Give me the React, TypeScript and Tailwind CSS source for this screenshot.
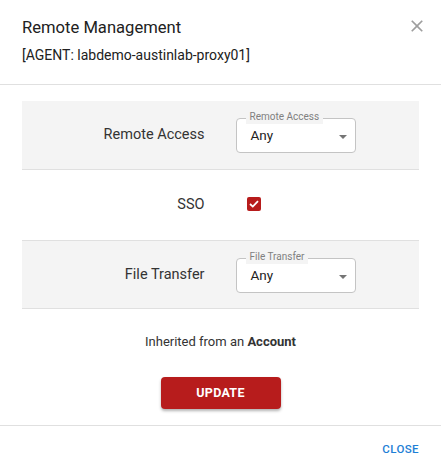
import React from "react";

function Select({ label, value }: { label: string; value: string }) {
  return (
    <div className="relative h-[35px] w-[120px] rounded-[4px] border border-[#c4c4c4] bg-white flex items-center pl-[14px]">
      <span className="absolute -top-[9px] left-[9px] bg-[#f4f4f4] px-[4px] text-[10px] leading-[14px] text-[#808080]">
        {label}
      </span>
      <span className="text-[13.5px] text-[#222]">{value}</span>
      <svg className="absolute right-[8px] top-[16px]" width="8" height="4" viewBox="0 0 8 4">
        <path d="M0 0 L8 0 L4 4 Z" fill="#757575" />
      </svg>
    </div>
  );
}

export default function App() {
  return (
    <div className="w-[441px] h-[473px] bg-white flex flex-col" style={{ fontFamily: "Roboto, 'Liberation Sans', sans-serif" }}>
      <div className="relative h-[84px] px-[22px] pt-[16px]">
        <div className="text-[16.6px] leading-[24px] text-[#212121]">Remote Management</div>
        <div className="mt-[5px] text-[14px] leading-[20px] text-[#212121]">[AGENT: labdemo-austinlab-proxy01]</div>
        <svg className="absolute right-[14px] top-[16px]" width="20" height="20" viewBox="0 0 24 24">
          <path d="M19 6.41L17.59 5 12 10.59 6.41 5 5 6.41 10.59 12 5 17.59 6.41 19 12 13.41 17.59 19 19 17.59 13.41 12z" fill="#9e9e9e" />
        </svg>
      </div>
      <div className="h-px bg-[#e0e0e0]" />
      <div className="px-[22px] pt-[16px] flex flex-col">
        <div className="h-[69px] bg-[#f4f4f4] border-b border-[#e0e0e0] grid grid-cols-2 items-center">
          <div className="text-right pr-[16px] text-[14.5px] text-[#333]">Remote Access</div>
          <div className="pl-[15px] pt-[1px]"><Select label="Remote Access" value="Any" /></div>
        </div>
        <div className="h-[71px] border-b border-[#e0e0e0] grid grid-cols-2 items-center">
          <div className="text-right pr-[16px] text-[14.5px] text-[#333]">SSO</div>
          <div className="pl-[26px] pb-[3px]">
            <div className="w-[14px] h-[14px] rounded-[2px] bg-[#b71c1c] flex items-center justify-center">
              <svg width="10" height="8" viewBox="0 0 10 8">
                <path d="M1 4 L3.8 6.6 L9 1.2" stroke="white" strokeWidth="1.8" fill="none" />
              </svg>
            </div>
          </div>
        </div>
        <div className="h-[68px] bg-[#f4f4f4] border-b border-[#e0e0e0] grid grid-cols-2 items-center">
          <div className="text-right pr-[16px] text-[14.5px] text-[#333]">File Transfer</div>
          <div className="pl-[15px] pt-[1px]"><Select label="File Transfer" value="Any" /></div>
        </div>
        <div className="mt-[24px] text-center text-[13px] leading-[18px] text-[#333]">
          Inherited from an <span className="font-bold">Account</span>
        </div>
        <div className="mt-[26px] flex justify-center">
          <button className="w-[120px] h-[32px] rounded-[4px] bg-[#b71c1c] text-white text-[12.5px] font-bold tracking-[0.3px] shadow-[0_2px_3px_rgba(0,0,0,0.3)]">
            UPDATE
          </button>
        </div>
      </div>
      <div className="mt-[16px] h-px bg-[#e0e0e0]" />
      <div className="flex justify-end pr-[22px] pt-[15px]">
        <span className="text-[11.5px] font-medium tracking-[0.4px] text-[#1e7fd6]">CLOSE</span>
      </div>
    </div>
  );
}
